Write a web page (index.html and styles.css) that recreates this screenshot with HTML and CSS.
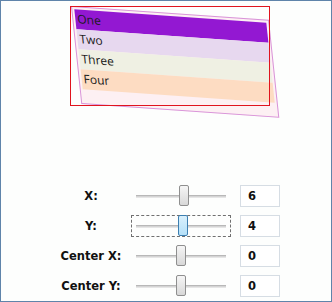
FILE: index.html
```html
<!DOCTYPE html>
<html lang="en">
<head>
    <meta charset="UTF-8">
    <title>Skew Transform</title>
    <link rel="stylesheet" href="styles.css">
</head>
<body>
    <div class="window">
        <div class="list-frame">
            <div class="listbox">
                <div class="item item-one">One</div>
                <div class="item item-two">Two</div>
                <div class="item item-three">Three</div>
                <div class="item item-four">Four</div>
            </div>
        </div>

        <div class="controls">
            <div class="label">X:</div>
            <div class="slider">
                <div class="track"></div>
                <div class="thumb" style="left: 48px"></div>
            </div>
            <div class="value">6</div>

            <div class="label">Y:</div>
            <div class="slider focused">
                <div class="track"></div>
                <div class="thumb" style="left: 47px"></div>
            </div>
            <div class="value">4</div>

            <div class="label">Center X:</div>
            <div class="slider">
                <div class="track"></div>
                <div class="thumb" style="left: 45px"></div>
            </div>
            <div class="value">0</div>

            <div class="label">Center Y:</div>
            <div class="slider">
                <div class="track"></div>
                <div class="thumb" style="left: 45px"></div>
            </div>
            <div class="value">0</div>
        </div>
    </div>
</body>
</html>
```

FILE: styles.css
```css
body {
    margin: 0;
    padding: 0;
    background-color: white;
}
.window {
    width: 332px;
    height: 302px;
    box-sizing: border-box;
    border: 1px solid #5f84aa;
    background-color: #fdfefd;
    overflow: hidden;
}
.list-frame {
    position: relative;
    width: 200px;
    height: 100px;
    box-sizing: border-box;
    margin: 5px 0 0 69px;
}
.list-frame::after {
    content: "";
    position: absolute;
    left: 0;
    top: 0;
    right: 0;
    bottom: 0;
    border: 1px solid #e0141e;
    z-index: 2;
}
.listbox {
    width: 198px;
    height: 98px;
    margin: 1px;
    box-sizing: border-box;
    border: 1px solid #d994d9;
    background-color: #fdf0f3;
    padding: 2px;
    transform-origin: 0 0;
    transform: skew(6deg, 4deg);
    font-family: 'Open Sans', 'Noto Sans', sans-serif;
    font-size: 12px;
    color: #1a1a1a;
}
.item {
    height: 20px;
    line-height: 20px;
    padding-left: 2px;
}
.item-one {
    background-color: #9318d2;
}
.item-two {
    background-color: #e7d8ef;
}
.item-three {
    background-color: #eff0e3;
}
.item-four {
    background-color: #fddcc2;
}
.controls {
    display: grid;
    grid-template-columns: 80px 100px 49px;
    grid-auto-rows: 30px;
    align-items: center;
    margin: 75px 0 0 50px;
    font-family: 'DejaVu Sans', Verdana, sans-serif;
    font-weight: bold;
    font-size: 11.5px;
    color: #111;
}
.label {
    text-align: center;
}
.slider {
    position: relative;
    height: 22px;
    box-sizing: border-box;
    border: 1px dashed transparent;
}
.slider.focused {
    border-color: #707070;
}
.track {
    position: absolute;
    left: 4px;
    right: 4px;
    top: 9px;
    height: 3px;
    box-sizing: border-box;
    border-top: 1px solid #b8b8b8;
    border-bottom: 1px solid #e6e6e6;
    background-color: #d4d4d4;
}
.thumb {
    position: absolute;
    top: -1px;
    width: 10px;
    height: 21px;
    box-sizing: border-box;
    border: 1px solid #8f8f8f;
    border-radius: 2px;
    background: linear-gradient(to bottom, #f6f6f6, #d8d8d8);
    margin-left: -1px;
}
.slider.focused .thumb {
    border-color: #3c7fb1;
    background: linear-gradient(to bottom, #d9f0fc, #b4e0f8);
}
.value {
    height: 22px;
    line-height: 21px;
    margin-left: 9px;
    box-sizing: border-box;
    border: 1px solid #d6dde4;
    background-color: white;
    padding-left: 7px;
}
```
